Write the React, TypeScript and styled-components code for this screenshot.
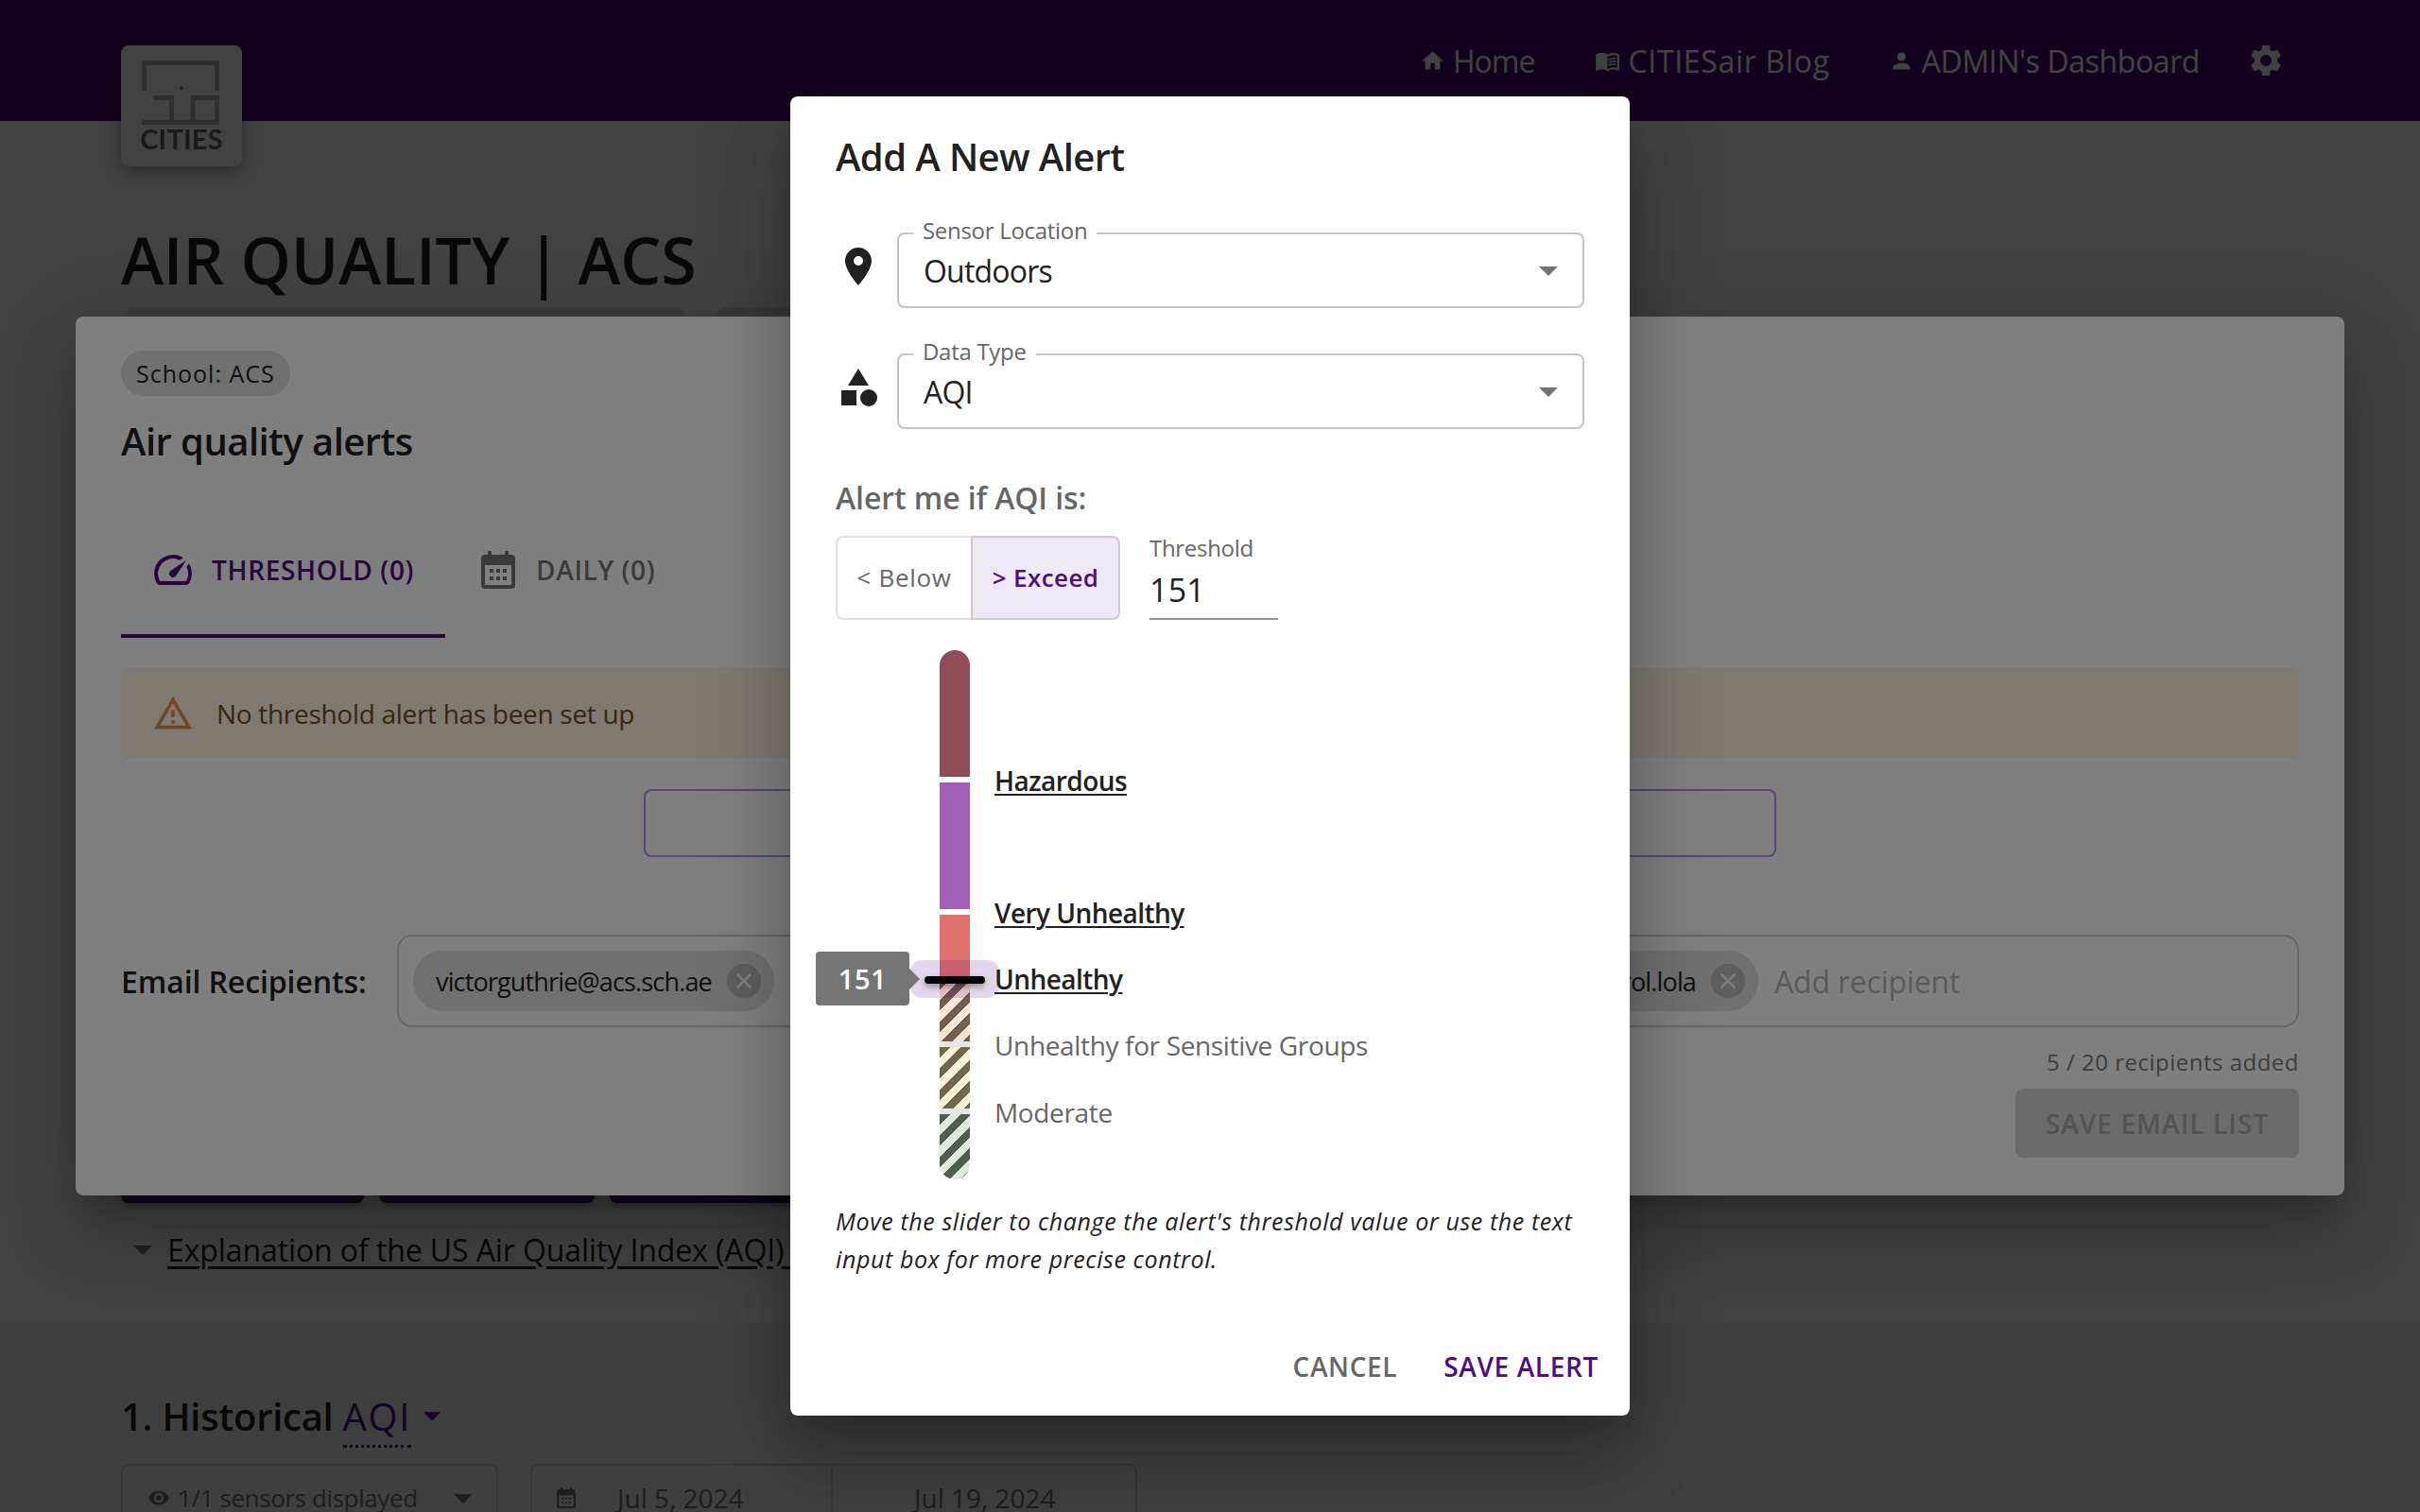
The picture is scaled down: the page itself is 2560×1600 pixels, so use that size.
import styled, { createGlobalStyle } from "styled-components";
import {
  MdArrowDropDown,
  MdCategory,
  MdClose,
  MdHome,
  MdLocationOn,
  MdMenuBook,
  MdOutlineWarningAmber,
  MdPerson,
  MdSettings,
  MdSpeed,
  MdVisibility,
} from "react-icons/md";

const PURPLE = "#4e0c80";
const FONT = `"Open Sans", "Noto Sans", sans-serif`;

const GlobalStyle = createGlobalStyle`
  html, body {
    margin: 0;
    padding: 0;
    background: #fff;
  }
  body {
    font-family: ${FONT};
    color: #212121;
    overflow: hidden;
  }
  * {
    box-sizing: border-box;
  }
`;

const Screen = styled.div`
  position: relative;
  width: 2560px;
  height: 1600px;
  overflow: hidden;
  background: #fff;
`;

/* ---------- page underneath ---------- */

const AppBar = styled.header`
  display: flex;
  align-items: flex-start;
  height: 128px;
  padding: 0 143px 0 128px;
  background: #4d0477;
`;

const Logo = styled.div`
  flex: none;
  display: flex;
  flex-direction: column;
  align-items: center;
  width: 128px;
  height: 128px;
  margin-top: 48px;
  padding-top: 16px;
  background: #fff;
  border-radius: 8px;
  box-shadow: 0 6px 20px rgba(0, 0, 0, 0.35);
`;

const LogoWord = styled.span`
  margin-top: 1px;
  font-family: Lato, sans-serif;
  font-size: 29px;
  line-height: 28px;
  font-weight: 700;
  letter-spacing: 0.2px;
  color: #666;
`;

const Nav = styled.nav`
  display: flex;
  align-items: center;
  margin-left: auto;
  height: 128px;
`;

const NavLink = styled.a<{ $gap: number; $track: number }>`
  display: flex;
  align-items: center;
  gap: 8px;
  margin-right: ${(p) => p.$gap}px;
  font-size: 32px;
  letter-spacing: ${(p) => p.$track}px;
  color: #fff;
  & svg {
    flex: none;
  }
`;

const PageBody = styled.main`
  padding: 0 128px;
`;

const PageTitle = styled.h1`
  margin: 105px 0 8px;
  font-size: 68px;
  line-height: 84px;
  font-weight: 600;
  letter-spacing: -0.1px;
  color: #212121;
`;

const CardRow = styled.div`
  display: flex;
  gap: 26px;
  height: 860px;
  margin-bottom: 16px;
`;

const Card = styled.div`
  width: 600px;
  background: #e6e6e6;
  border-radius: 16px;
`;

const ActionRow = styled.div`
  display: flex;
  gap: 16px;
`;

const ActionButton = styled.div<{ $w: number }>`
  width: ${(p) => p.$w}px;
  height: 72px;
  background: #4d0477;
  border-radius: 8px;
  box-shadow: 0 3px 6px rgba(0, 0, 0, 0.3);
`;

const Explanation = styled.div`
  display: flex;
  align-items: center;
  height: 44px;
  margin-top: 27px;
  font-size: 32px;
  letter-spacing: -0.1px;
  color: #212121;
  & svg {
    margin-left: -1px;
    margin-right: 2px;
    color: #757575;
  }
  & u {
    text-underline-offset: 5px;
  }
`;

const HistorySection = styled.section`
  height: 300px;
  margin-top: 57px;
  padding: 67px 128px 0;
  background: #f2f2f2;
`;

const HistoryTitle = styled.h2`
  display: flex;
  align-items: center;
  margin: 0;
  height: 60px;
  font-size: 40px;
  font-weight: 600;
  letter-spacing: -0.25px;
  color: #212121;
  & svg {
    margin-left: 0;
    color: ${PURPLE};
  }
`;

const MetricName = styled.span`
  position: relative;
  margin-left: 10px;
  font-weight: 500;
  letter-spacing: 1.6px;
  color: ${PURPLE};
  &::after {
    content: "";
    position: absolute;
    left: 0;
    right: 0;
    bottom: -6px;
    border-bottom: 3px dotted ${PURPLE};
  }
`;

const FilterRow = styled.div`
  display: flex;
  gap: 34px;
  margin-top: 21px;
`;

const FilterBox = styled.div`
  display: flex;
  align-items: center;
  height: 72px;
  border: 2px solid #cfcfcf;
  border-radius: 8px;
  font-size: 28px;
  white-space: nowrap;
  color: #757575;
`;

const SensorFilter = styled(FilterBox)`
  width: 399px;
  padding: 0 11px 0 26px;
  gap: 8px;
  font-size: 26px;
  letter-spacing: -0.4px;
  & svg:first-child {
    flex: none;
  }
  & svg:last-child {
    margin-left: auto;
    color: #757575;
  }
`;

const DateFilter = styled(FilterBox)`
  width: 642px;
`;

const DateCell = styled.div<{ $w: number; $pad: number }>`
  display: flex;
  align-items: center;
  gap: 44px;
  width: ${(p) => p.$w}px;
  height: 100%;
  padding-left: ${(p) => p.$pad}px;
  & + & {
    border-left: 2px solid #cfcfcf;
  }
`;

/* ---------- overlays ---------- */

const Backdrop = styled.div<{ $alpha: number }>`
  position: absolute;
  inset: 0;
  background: rgba(0, 0, 0, ${(p) => p.$alpha});
`;

const DIALOG_SHADOW = `0 22px 30px -14px rgba(0, 0, 0, 0.2), 0 48px 76px 6px rgba(0, 0, 0, 0.14),
  0 18px 92px 16px rgba(0, 0, 0, 0.12)`;

const AlertsDialog = styled.div`
  position: absolute;
  left: 80px;
  top: 335px;
  width: 2400px;
  padding: 36px 48px 40px;
  background: #fff;
  border-radius: 8px;
  box-shadow: ${DIALOG_SHADOW};
`;

const SchoolChip = styled.span`
  display: inline-flex;
  align-items: center;
  height: 48px;
  padding: 0 16px;
  background: #e0e0e0;
  border-radius: 24px;
  font-size: 25px;
  font-weight: 500;
  letter-spacing: 1px;
  color: #212121;
`;

const DialogHeading = styled.h2`
  margin: 18px 0 36px;
  font-size: 40px;
  line-height: 60px;
  font-weight: 600;
  letter-spacing: -0.55px;
  color: #212121;
`;

const Tabs = styled.div`
  display: flex;
  height: 142px;
`;

const Tab = styled.div<{ $active?: boolean }>`
  display: flex;
  align-items: center;
  gap: ${(p) => (p.$active ? 17 : 22)}px;
  padding: ${(p) => (p.$active ? "2px 33px 0 31px" : "2px 33px 0 38px")};
  border-bottom: 4px solid ${(p) => (p.$active ? PURPLE : "transparent")};
  font-size: 28px;
  font-weight: 600;
  letter-spacing: 0.65px;
  color: ${(p) => (p.$active ? PURPLE : "#757575")};
`;

const WarningBanner = styled.div`
  display: flex;
  align-items: center;
  gap: 24px;
  height: 95px;
  margin-top: 32px;
  padding-left: 33px;
  background: #fdf3e2;
  border-radius: 8px;
  font-size: 28px;
  letter-spacing: -0.3px;
  color: #6e4c20;
  & svg {
    color: #e08c50;
  }
`;

const AddAlertButton = styled.div`
  width: 1198px;
  height: 72px;
  margin: 33px auto 0;
  border: 2px solid #b888e8;
  border-radius: 8px;
`;

const RecipientRow = styled.div`
  display: flex;
  align-items: center;
  gap: 32px;
  margin-top: 82px;
`;

const RecipientLabel = styled.span`
  flex: none;
  width: 260px;
  font-size: 32px;
  font-weight: 600;
  letter-spacing: -0.1px;
  white-space: nowrap;
  color: #212121;
`;

const RecipientBox = styled.div`
  flex: 1;
  display: flex;
  align-items: center;
  gap: 17px;
  height: 98px;
  padding: 0 15px;
  border: 2px solid #cccccc;
  border-radius: 16px;
`;

const ChipList = styled.div`
  flex: 0 0 1423px;
  display: flex;
  justify-content: space-between;
`;

const EmailChip = styled.span`
  display: inline-flex;
  align-items: center;
  gap: 16px;
  height: 64px;
  padding: 0 14px 0 24px;
  background: #e0e0e0;
  border-radius: 32px;
  font-size: 27px;
  letter-spacing: -0.85px;
  color: #212121;
  &:first-child {
    margin-right: 30px;
  }
`;

const ChipDelete = styled.span`
  display: flex;
  align-items: center;
  justify-content: center;
  width: 36px;
  height: 36px;
  background: #bdbdbd;
  border-radius: 50%;
  color: #fff;
`;

const RecipientPlaceholder = styled.span`
  font-size: 32px;
  letter-spacing: -0.2px;
  color: #b5b5b5;
`;

const RecipientCount = styled.div`
  margin-top: 19px;
  font-size: 24px;
  line-height: 36px;
  letter-spacing: 0.5px;
  text-align: right;
  color: #7a7a7a;
`;

const SaveListRow = styled.div`
  display: flex;
  justify-content: flex-end;
  margin-top: 10px;
`;

const SaveListButton = styled.div`
  display: flex;
  align-items: center;
  justify-content: center;
  width: 300px;
  height: 73px;
  background: #d6d6d6;
  border-radius: 8px;
  font-size: 28px;
  font-weight: 600;
  letter-spacing: 1.1px;
  color: #a6a6a6;
`;

/* ---------- new alert modal ---------- */

const Modal = styled.div`
  position: absolute;
  left: 836px;
  top: 102px;
  width: 888px;
  height: 1396px;
  display: flex;
  flex-direction: column;
  background: #fff;
  border-radius: 8px;
  box-shadow: ${DIALOG_SHADOW};
`;

const ModalTitle = styled.h2`
  margin: 32px 0 48px 48px;
  font-size: 40px;
  line-height: 64px;
  font-weight: 600;
  letter-spacing: -0.6px;
  color: #212121;
`;

const ModalBody = styled.div`
  display: flex;
  flex-direction: column;
  padding: 0 48px;
`;

const FieldRow = styled.div`
  display: flex;
  align-items: center;
  gap: 17px;
  margin-bottom: 48px;
  & > svg {
    flex: none;
    margin-bottom: 9px;
    color: #212121;
  }
`;

const SelectBox = styled.div`
  position: relative;
  flex: 1;
  display: flex;
  align-items: center;
  height: 80px;
  padding: 0 12px 0 26px;
  border: 2px solid #c4c4c4;
  border-radius: 8px;
  font-size: 32px;
  letter-spacing: -0.8px;
  color: #212121;
  & svg {
    margin-left: auto;
    color: #757575;
  }
`;

const FloatingLabel = styled.label`
  position: absolute;
  left: 15px;
  top: -20px;
  padding: 0 10px;
  background: #fff;
  font-size: 24px;
  line-height: 32px;
  letter-spacing: -0.3px;
  color: #666;
`;

const ConditionLabel = styled.div`
  margin-top: 3px;
  font-size: 32px;
  line-height: 44px;
  font-weight: 600;
  letter-spacing: -0.1px;
  color: #666;
`;

const ConditionRow = styled.div`
  display: flex;
  gap: 31px;
  margin-top: 18px;
`;

const ToggleGroup = styled.div`
  display: flex;
  height: 89px;
`;

const ToggleButton = styled.div<{ $selected?: boolean }>`
  display: flex;
  align-items: center;
  justify-content: center;
  width: ${(p) => (p.$selected ? 158 : 143)}px;
  padding-bottom: 2px;
  border: 2px solid ${(p) => (p.$selected ? "#cfc6da" : "#e0e0e0")};
  border-right-width: ${(p) => (p.$selected ? 2 : 0)}px;
  border-radius: ${(p) => (p.$selected ? "0 8px 8px 0" : "8px 0 0 8px")};
  background: ${(p) => (p.$selected ? "#efe9f5" : "#fff")};
  font-size: 26px;
  font-weight: ${(p) => (p.$selected ? 600 : 500)};
  letter-spacing: ${(p) => (p.$selected ? 0.4 : 0.7)}px;
  color: ${(p) => (p.$selected ? PURPLE : "#666")};
`;

const ThresholdField = styled.div`
  display: flex;
  flex-direction: column;
  width: 136px;
  border-bottom: 2px solid #949494;
`;

const ThresholdLabel = styled.span`
  font-size: 24px;
  line-height: 26px;
  letter-spacing: -0.3px;
  color: #666;
`;

const ThresholdValue = styled.span`
  margin-top: 8px;
  font-size: 34px;
  line-height: 46px;
  letter-spacing: 0.2px;
  color: #212121;
`;

const SliderArea = styled.div`
  position: relative;
  height: 560px;
  margin-top: 32px;
`;

const SliderBar = styled.div`
  position: absolute;
  left: 110px;
  top: 0;
  display: flex;
  flex-direction: column;
  width: 32px;
  height: 560px;
  border-radius: 16px;
  overflow: hidden;
`;

const BarSegment = styled.div<{ $h: number; $color: string; $hatch?: string; $sep?: string }>`
  flex: none;
  height: ${(p) => p.$h}px;
  border-top: ${(p) => (p.$sep ? `6px solid ${p.$sep}` : "none")};
  background-color: ${(p) => p.$color};
  background-image: ${(p) =>
    p.$hatch
      ? `repeating-linear-gradient(135deg, ${p.$hatch} 0 8px, transparent 8px 16px)`
      : "none"};
`;

const BandLabel = styled.span<{ $top: number; $active?: boolean }>`
  position: absolute;
  left: 168px;
  top: ${(p) => p.$top}px;
  transform: translateY(-50%);
  font-size: 28px;
  line-height: 40px;
  font-weight: ${(p) => (p.$active ? 600 : 400)};
  letter-spacing: ${(p) => (p.$active ? -0.55 : -0.35)}px;
  white-space: nowrap;
  text-decoration: ${(p) => (p.$active ? "underline" : "none")};
  text-underline-offset: 3px;
  text-decoration-thickness: 2px;
  color: ${(p) => (p.$active ? "#212121" : "#666")};
`;

const ThumbHalo = styled.div`
  position: absolute;
  left: 78px;
  top: 328px;
  width: 96px;
  height: 40px;
  background: rgba(75, 0, 130, 0.16);
  border-radius: 14px;
`;

const Thumb = styled.div`
  position: absolute;
  left: 94px;
  top: 345px;
  width: 64px;
  height: 8px;
  background: #000;
  border-radius: 4px;
  box-shadow: 0 3px 6px rgba(0, 0, 0, 0.35);
`;

const ValueBubble = styled.div`
  position: absolute;
  left: -21px;
  top: 319px;
  display: flex;
  align-items: center;
  justify-content: center;
  width: 99px;
  height: 57px;
  background: #757575;
  border-radius: 4px;
  font-size: 29px;
  font-weight: 600;
  letter-spacing: 0.6px;
  color: #fff;
  &::after {
    content: "";
    position: absolute;
    left: 99px;
    top: 18px;
    border-left: 11px solid #757575;
    border-top: 11px solid transparent;
    border-bottom: 11px solid transparent;
  }
`;

const HelpText = styled.p`
  margin: 24px 0 0;
  font-size: 25px;
  line-height: 40px;
  font-style: italic;
  letter-spacing: 0.6px;
  color: #212121;
`;

const ModalFooter = styled.div`
  display: flex;
  justify-content: flex-end;
  gap: 49px;
  margin-top: auto;
  padding: 0 33px 32px 0;
`;

const FooterButton = styled.span<{ $primary?: boolean }>`
  font-size: 28px;
  line-height: 40px;
  font-weight: 600;
  letter-spacing: 0.65px;
  color: ${(p) => (p.$primary ? PURPLE : "#666")};
`;

const CitiesMark = () => (
  <svg width="84" height="68" viewBox="0 0 84 68" fill="none" stroke="#b4b4b4" strokeWidth="5">
    <path d="M2.5 32V2.5H79.5V32" />
    <rect x="40" y="27" width="4" height="4" fill="#b4b4b4" stroke="none" />
    <path d="M13 39.5H31.5V65M0 65.5H82M54 65V39.5H79.5V65" />
  </svg>
);

const CalendarGlyph = ({ w, h, color }: { w: number; h: number; color: string }) => (
  <svg width={w} height={h} viewBox="0 0 36 40" fill={color}>
    <path
      fillRule="evenodd"
      d="M7 0h4v4h14V0h4v4h3a4 4 0 0 1 4 4v28a4 4 0 0 1-4 4H4a4 4 0 0 1-4-4V8a4 4 0 0 1 4-4h3V0zM4 15v21h28V15H4z"
    />
    <path d="M9 19h4v4H9zM16 19h4v4h-4zM23 19h4v4h-4zM9 27h4v4H9zM16 27h4v4h-4zM23 27h4v4h-4z" />
  </svg>
);

const BAR_SEGMENTS = [
  { h: 134, color: "#8f4d57" },
  { h: 140, color: "#a15fb8", sep: "#fff" },
  { h: 74, color: "#e0736d", sep: "#fff" },
  { h: 66, color: "#fde6d6", hatch: "#6f5f50" },
  { h: 71, color: "#fdf2d6", hatch: "#6f6750", sep: "#e6e6e2" },
  { h: 75, color: "#dfe9dc", hatch: "#505e50", sep: "#e6e6e2" },
];

const BANDS = [
  { label: "Hazardous", top: 138, active: true },
  { label: "Very Unhealthy", top: 278, active: true },
  { label: "Unhealthy", top: 348, active: true },
  { label: "Unhealthy for Sensitive Groups", top: 418, active: false },
  { label: "Moderate", top: 489, active: false },
];

const RECIPIENTS = [
  "victorguthrie@acs.sch.ae",
  "ana@acs.sch",
  "ben@acs.sch",
  "eva@acs.sch",
  "carol.lola",
];

export default function App() {
  return (
    <Screen>
      <GlobalStyle />

      <AppBar>
        <Logo>
          <CitiesMark />
          <LogoWord>CITIES</LogoWord>
        </Logo>
        <Nav>
          <NavLink $gap={64} $track={-1}>
            <MdHome size={27} />
            Home
          </NavLink>
          <NavLink $gap={62} $track={0.7}>
            <MdMenuBook size={27} />
            CITIESair Blog
          </NavLink>
          <NavLink $gap={50} $track={-0.4}>
            <MdPerson size={27} />
            ADMIN's Dashboard
          </NavLink>
          <MdSettings size={40} color="#fff" />
        </Nav>
      </AppBar>

      <PageBody>
        <PageTitle>AIR QUALITY | ACS</PageTitle>
        <CardRow>
          <Card />
          <Card />
        </CardRow>
        <ActionRow>
          <ActionButton $w={257} />
          <ActionButton $w={228} />
          <ActionButton $w={200} />
        </ActionRow>
        <Explanation>
          <MdArrowDropDown size={48} />
          <u>Explanation of the US Air Quality Index (AQI) and its health guidance</u>
        </Explanation>
      </PageBody>

      <HistorySection>
        <HistoryTitle>
          1. Historical
          <MetricName>AQI</MetricName>
          <MdArrowDropDown size={44} />
        </HistoryTitle>
        <FilterRow>
          <SensorFilter>
            <MdVisibility size={24} />
            1/1 sensors displayed
            <MdArrowDropDown size={48} />
          </SensorFilter>
          <DateFilter>
            <DateCell $w={316} $pad={26}>
              <CalendarGlyph w={20} h={24} color="#757575" />
              Jul 5, 2024
            </DateCell>
            <DateCell $w={322} $pad={86}>
              Jul 19, 2024
            </DateCell>
          </DateFilter>
        </FilterRow>
      </HistorySection>

      <Backdrop $alpha={0.48} />

      <AlertsDialog>
        <SchoolChip>School: ACS</SchoolChip>
        <DialogHeading>Air quality alerts</DialogHeading>
        <Tabs>
          <Tab $active>
            <MdSpeed size={48} />
            THRESHOLD (0)
          </Tab>
          <Tab>
            <CalendarGlyph w={36} h={40} color="#757575" />
            DAILY (0)
          </Tab>
        </Tabs>
        <WarningBanner>
          <MdOutlineWarningAmber size={44} />
          No threshold alert has been set up
        </WarningBanner>
        <AddAlertButton />
        <RecipientRow>
          <RecipientLabel>Email Recipients:</RecipientLabel>
          <RecipientBox>
            <ChipList>
              {RECIPIENTS.map((email) => (
                <EmailChip key={email}>
                  {email}
                  <ChipDelete>
                    <MdClose size={28} />
                  </ChipDelete>
                </EmailChip>
              ))}
            </ChipList>
            <RecipientPlaceholder>Add recipient</RecipientPlaceholder>
          </RecipientBox>
        </RecipientRow>
        <RecipientCount>5 / 20 recipients added</RecipientCount>
        <SaveListRow>
          <SaveListButton>SAVE EMAIL LIST</SaveListButton>
        </SaveListRow>
      </AlertsDialog>

      <Backdrop $alpha={0.5} />

      <Modal>
        <ModalTitle>Add A New Alert</ModalTitle>
        <ModalBody>
          <FieldRow>
            <MdLocationOn size={48} />
            <SelectBox>
              <FloatingLabel>Sensor Location</FloatingLabel>
              Outdoors
              <MdArrowDropDown size={48} />
            </SelectBox>
          </FieldRow>
          <FieldRow>
            <MdCategory size={48} />
            <SelectBox>
              <FloatingLabel>Data Type</FloatingLabel>
              AQI
              <MdArrowDropDown size={48} />
            </SelectBox>
          </FieldRow>
          <ConditionLabel>Alert me if AQI is:</ConditionLabel>
          <ConditionRow>
            <ToggleGroup>
              <ToggleButton>&lt; Below</ToggleButton>
              <ToggleButton $selected>&gt; Exceed</ToggleButton>
            </ToggleGroup>
            <ThresholdField>
              <ThresholdLabel>Threshold</ThresholdLabel>
              <ThresholdValue>151</ThresholdValue>
            </ThresholdField>
          </ConditionRow>
          <SliderArea>
            <SliderBar>
              {BAR_SEGMENTS.map((seg, i) => (
                <BarSegment key={i} $h={seg.h} $color={seg.color} $hatch={seg.hatch} $sep={seg.sep} />
              ))}
            </SliderBar>
            <ThumbHalo />
            <Thumb />
            <ValueBubble>151</ValueBubble>
            {BANDS.map((band) => (
              <BandLabel key={band.label} $top={band.top} $active={band.active}>
                {band.label}
              </BandLabel>
            ))}
          </SliderArea>
          <HelpText>
            Move the slider to change the alert's threshold value or use the text input box for more precise control.
          </HelpText>
        </ModalBody>
        <ModalFooter>
          <FooterButton>CANCEL</FooterButton>
          <FooterButton $primary>SAVE ALERT</FooterButton>
        </ModalFooter>
      </Modal>
    </Screen>
  );
}
